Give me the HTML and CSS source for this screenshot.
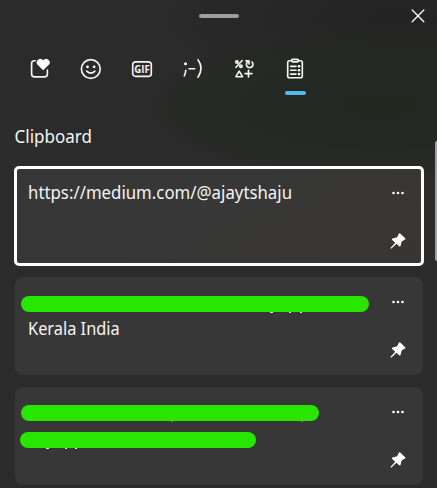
FILE: index.html
```html
<!DOCTYPE html>
<html lang="en">
<head>
<meta charset="utf-8">
<title>Clipboard</title>
<link rel="stylesheet" href="styles.css">
</head>
<body>
<svg class="defs" aria-hidden="true">
  <symbol id="pin" viewBox="0 0 16 16"><path d="M8.800.7Q9.700 -.1 10.500.7L15.200 5.200Q15.900 6 14.900 6.600L11.700 8.500 10.500 12.900Q9.900 14.100 8.900 13.100L6.400 10.800 1.200 15.700.4 15 5.200 9.700 2.200 7Q1.400 6 2.600 5.500L7.200 4.200Z"/></symbol>
  <symbol id="more" viewBox="0 0 14 4"><circle cx="2.500" cy="2" r="1.300"/><circle cx="7" cy="2" r="1.300"/><circle cx="11.500" cy="2" r="1.300"/></symbol>
</svg>
<main class="panel">
  <header class="titlebar">
    <span class="handle"></span>
    <button class="close" aria-label="Close"><svg width="14" height="14" viewBox="0 0 14 14"><path class="line thin" d="M1.200 1 12.800 12.800M12.800 1 1.200 12.800"/></svg></button>
  </header>
  <nav class="tabs">
    <button class="tab" aria-label="Recent">
      <svg width="22" height="22" viewBox="-.4 0 22 22"><path class="line" d="M5.800 2.700H5A2.800 2.800 0 0 0 2.200 5.500V16A2.800 2.800 0 0 0 5 18.800H15.200A2.800 2.800 0 0 0 18 16V12"/><path class="solid" d="M13.800 12.200 8.200 6.800A3.400 3.400 0 0 1 13.800 2.200 3.400 3.400 0 0 1 19.400 6.800Z"/></svg>
    </button>
    <button class="tab" aria-label="Emoji">
      <svg width="22" height="22" viewBox="0 0 22 22"><circle class="line" cx="10.800" cy="11" r="9.400"/><circle class="solid" cx="7.500" cy="8.800" r="1.400"/><circle class="solid" cx="14.100" cy="8.800" r="1.400"/><path class="line" d="M6.700 13.200Q10.800 17.200 14.900 13.200"/></svg>
    </button>
    <button class="tab" aria-label="GIF">
      <svg width="22" height="22" viewBox="0 0 22 22"><rect class="line" x="1.700" y="3.800" width="18.600" height="14.600" rx="3"/><text class="gif" x="11" y="14.900" textLength="15.500" lengthAdjust="spacingAndGlyphs">GIF</text></svg>
    </button>
    <button class="tab" aria-label="Kaomoji">
      <svg width="22" height="22" viewBox="0 0 22 22"><circle class="solid" cx="3.500" cy="5.800" r="1.500"/><path class="line" d="M3.800 12.300Q3.700 15 2.300 17.800M7 10.700H12.700M16 1.800Q22 10 16 19.200"/></svg>
    </button>
    <button class="tab" aria-label="Symbols">
      <svg width="22" height="22" viewBox="0 0 22 22"><circle class="line" cx="3.900" cy="4" r="1.200"/><circle class="line" cx="7.900" cy="8.200" r="1.200"/><path class="line" d="M9.200 2.500 3 9.300M13 2.900H16V6M15.700 3.200A3.300 3.300 0 1 0 19 4M6.200 13.200 2.900 18.700H9.500ZM15.500 12.200V19M12 15.600H19"/></svg>
    </button>
    <button class="tab active" aria-label="Clipboard history">
      <svg width="22" height="22" viewBox="0 0 22 22"><path class="line" d="M7.500 2.700H5.500Q3.700 2.700 3.700 4.500V17.900Q3.700 19.700 5.500 19.700H16.500Q18.300 19.700 18.300 17.900V4.500Q18.300 2.700 16.500 2.700H14.500"/><rect class="line" x="7.500" y="1.300" width="7" height="2.600" rx="1.300"/><path class="line" d="M6.600 8.300H12M6.600 12.200H12M6.600 16.100H12"/><g class="solid"><circle cx="15" cy="8.300" r="1.300"/><circle cx="15" cy="12.200" r="1.300"/><circle cx="15" cy="16.100" r="1.300"/></g></svg>
    </button>
  </nav>
  <h1 class="heading">Clipboard</h1>
  <section class="list">
    <article class="card selected">
      <div class="content"><p class="url">https://medium.com/@ajaytshaju</p></div>
      <div class="actions"><svg class="more"><use href="#more"/></svg><svg class="pin"><use href="#pin"/></svg></div>
    </article>
    <article class="card">
      <div class="content"><div class="redaction wide"><i class="speck s1"></i><i class="speck s2"></i><i class="speck s3"></i></div><p class="place">Kerala India</p></div>
      <div class="actions"><svg class="more"><use href="#more"/></svg><svg class="pin"><use href="#pin"/></svg></div>
    </article>
    <article class="card double">
      <div class="content"><div class="redaction medium"><i class="speck faint s4"></i><i class="speck faint s5"></i></div><div class="redaction short"><i class="speck s6"></i><i class="speck s7"></i><i class="speck s8"></i></div></div>
      <div class="actions"><svg class="more"><use href="#more"/></svg><svg class="pin"><use href="#pin"/></svg></div>
    </article>
  </section>
  <div class="scrollbar"></div>
</main>
</body>
</html>
```

FILE: styles.css
```css
* { box-sizing: border-box; }
body { margin: 0; color: #f4f4f4; font-family: "Noto Sans", "Open Sans", sans-serif; background: #2b2b2b; }
button { padding: 0; border: 0; background: none; color: inherit; }
p, h1 { margin: 0; font-weight: 400; white-space: nowrap; transform-origin: left; }
.defs { position: absolute; width: 0; height: 0; }
.panel {
  position: relative; height: 488px; overflow: hidden;
  background: radial-gradient(ellipse 260px 85px at 380px 105px, #222820 0%, #242823 45%, transparent 100%),
    radial-gradient(ellipse 260px 80px at 400px 20px, #232323 0%, transparent 100%), #2b2b2b;
}
.titlebar { height: 58px; display: grid; grid-template-columns: 1fr 40px 1fr; padding: 0 0 0 1px; }
.handle { grid-column: 2; height: 4px; margin-top: 14px; border-radius: 2px; background: #9d9d9d; }
.close { justify-self: end; align-self: start; width: 14px; height: 14px; margin: 9px 12px 0 0; }
svg { display: block; }
.line { fill: none; stroke: #f4f4f4; stroke-width: 1.65; stroke-linecap: round; stroke-linejoin: round; }
.thin { stroke-width: 1.4; }
.solid, .more, .pin { fill: #fff; }
.tabs { display: flex; gap: 29px; height: 37px; padding-left: 29px; }
.tab { width: 22px; height: 37px; display: flex; flex-direction: column; }
.active::after { content: ""; width: 21px; height: 4px; margin: 11px 0 0 1px; border-radius: 2px; background: #55b9e9; }
.gif { font: 700 10.5px "Open Sans", sans-serif; text-anchor: middle; fill: #f4f4f4; }
.heading { height: 71px; padding: 29px 0 0 15px; font-size: 17.5px; line-height: 24px; transform: scaleX(.97); }
.list { padding: 0 14px 0 15px; }
.card { display: flex; justify-content: space-between; height: 98px; margin: 0 0 12px; border-radius: 8px; background: #373737; }
.selected { height: 100px; margin: 0 -1px 11px; border: 3px solid #fff; border-radius: 5px; background: linear-gradient(150deg, #373737 45%, #383633); }
.content { padding: 19px 0 0 6px; }
.selected .content { padding: 11px 0 0 10.5px; }
.double .content { padding: 18px 0 0 5px; }
.url, .place { width: max-content; font-size: 17.5px; line-height: 24px; }
.url { transform: scaleX(.96); }
.place { margin: 4px 0 0 6.5px; transform: scaleX(.935); }
.redaction { position: relative; height: 16px; border-radius: 8px; background: #28e600; }
.wide { width: 348px; }
.medium { width: 298px; margin-left: 1px; }
.short { width: 236px; margin-top: 11px; }
.actions { display: flex; flex-direction: column; align-items: center; padding: 22.5px 17px 0 0; }
.selected .actions { padding: 21.5px 15px 0 0; }
.more { width: 14px; height: 4px; }
.pin { width: 16px; height: 16px; margin-top: 38.5px; }
.speck { position: absolute; top: 100%; width: 3px; height: 1px; background: #ddd; }
.faint { opacity: .35; }
.s1 { left: 249px; } .s2 { left: 268px; width: 2px; } .s3 { left: 279px; width: 2px; }
.s4 { left: 150px; width: 2px; } .s5 { left: 280px; width: 2px; }
.s6 { left: 26px; } .s7 { left: 45px; width: 2px; } .s8 { left: 55px; width: 2px; }
.scrollbar { position: absolute; right: 0; top: 141px; width: 2px; height: 120px; background: #a0a0a0; border-radius: 2px 0 0 2px; }
```
